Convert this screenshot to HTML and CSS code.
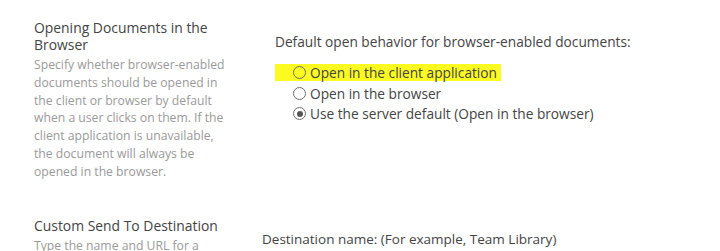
FILE: index.html
```html
<!DOCTYPE html>
<html lang="en">
<head>
    <meta charset="UTF-8">
    <title>Document Library Advanced Settings</title>
    <link rel="stylesheet" href="styles.css">
</head>
<body>
    <main class="settings">
        <section class="setting-row">
            <div class="setting-info">
                <h3 class="setting-title">Opening Documents in the Browser</h3>
                <p class="setting-desc">Specify whether browser-enabled<br>
                    documents should be opened in<br>
                    the client or browser by default<br>
                    when a user clicks on them. If the<br>
                    client application is unavailable,<br>
                    the document will always be<br>
                    opened in the browser.</p>
            </div>
            <div class="setting-control">
                <p class="control-label">Default open behavior for browser-enabled documents:</p>
                <div class="radio-list">
                    <label class="radio-item highlight">
                        <span class="radio"></span>
                        Open in the client application
                    </label>
                    <label class="radio-item">
                        <span class="radio"></span>
                        Open in the browser
                    </label>
                    <label class="radio-item">
                        <span class="radio checked"></span>
                        Use the server default (Open in the browser)
                    </label>
                </div>
            </div>
        </section>
        <section class="setting-row">
            <div class="setting-info">
                <h3 class="setting-title">Custom Send To Destination</h3>
                <p class="setting-desc">Type the name and URL for a<br>
                    custom Send To destination.</p>
            </div>
            <div class="setting-control second">
                <p class="control-label">Destination name: (For example, Team Library)</p>
            </div>
        </section>
    </main>
</body>
</html>
```

FILE: styles.css
```css
body {
    margin: 0;
    background-color: #ffffff;
    font-family: 'Open Sans', 'Noto Sans', sans-serif;
    color: #444444;
    overflow: hidden;
}
.settings {
    padding: 19px 0 0 34px;
}
.setting-row {
    display: grid;
    grid-template-columns: 200px 1fr;
    column-gap: 4px;
    margin-bottom: 36px;
}
.setting-title {
    margin: 0;
    font-size: 13.9px;
    font-weight: normal;
    line-height: 17px;
    color: #444444;
}
.setting-desc {
    margin: 3px 0 0;
    font-size: 12.2px;
    line-height: 17.8px;
    color: #9a9a9a;
    white-space: nowrap;
}
.setting-control {
    padding: 14px 0 0 37px;
}
.setting-control.second {
    padding-left: 24px;
}
.control-label {
    margin: 0;
    font-size: 13.7px;
    line-height: 17px;
    color: #444444;
    white-space: nowrap;
}
.second .control-label {
    font-size: 13.5px;
}
.radio-list {
    display: flex;
    flex-direction: column;
    gap: 3.5px;
    margin-top: 14px;
}
.radio-item {
    display: flex;
    align-items: center;
    gap: 4px;
    height: 17px;
    padding-left: 18px;
    font-size: 13.7px;
    color: #444444;
    width: max-content;
}
.radio-item.highlight {
    background-color: #fbfb22;
    padding-right: 4px;
}
.radio {
    width: 11px;
    height: 11px;
    border: 1px solid #6e6e6e;
    border-radius: 50%;
    box-sizing: content-box;
    position: relative;
}
.radio.checked::after {
    content: '';
    position: absolute;
    top: 2.5px;
    left: 2.5px;
    width: 6px;
    height: 6px;
    border-radius: 50%;
    background-color: #555555;
}
```
